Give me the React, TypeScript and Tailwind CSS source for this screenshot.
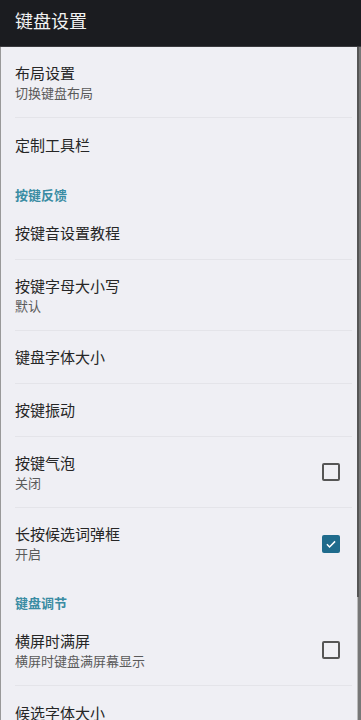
import React from "react";

type Item = {
  title: string;
  sub?: string;
  check?: boolean | null;
};

const group1: Item[] = [
  { title: "布局设置", sub: "切换键盘布局" },
  { title: "定制工具栏" },
];

const group2: Item[] = [
  { title: "按键音设置教程" },
  { title: "按键字母大小写", sub: "默认" },
  { title: "键盘字体大小" },
  { title: "按键振动" },
  { title: "按键气泡", sub: "关闭", check: false },
  { title: "长按候选词弹框", sub: "开启", check: true },
];

const group3: Item[] = [
  { title: "横屏时满屏", sub: "横屏时键盘满屏幕显示", check: false },
  { title: "候选字体大小" },
];

function CheckBox({ checked }: { checked: boolean }) {
  if (checked) {
    return (
      <div className="flex h-[18px] w-[18px] items-center justify-center rounded-[2px] bg-[#1f6b8c]">
        <svg viewBox="0 0 24 24" className="h-[14px] w-[14px]" fill="none">
          <path d="M5 12.5l4.5 4.5L19 7.5" stroke="#fff" strokeWidth="2.6" />
        </svg>
      </div>
    );
  }
  return <div className="h-[18px] w-[18px] rounded-[2px] border-2 border-[#555]" />;
}

function Row({ item, last }: { item: Item; last?: boolean }) {
  return (
    <div className={"ml-[14px] mr-[4px] flex items-center " + (item.sub ? "h-[71px] " : "h-[53px] ") + (last ? "" : "border-b border-[#e4e4e9]")}>
      <div className="flex flex-1 flex-col">
        <div className="text-[15px] leading-[20px] text-[#262626]">{item.title}</div>
        {item.sub && <div className="mt-[1px] text-[13px] leading-[18px] text-[#5a5a5a]">{item.sub}</div>}
      </div>
      {item.check !== undefined && item.check !== null && (
        <div className="mr-[12px]">
          <CheckBox checked={item.check} />
        </div>
      )}
    </div>
  );
}

function Header({ text }: { text: string }) {
  return (
    <div className="flex h-[36px] items-end px-[14px] pb-[3px] text-[13px] font-semibold leading-[18px] text-[#3a8ca3]">
      {text}
    </div>
  );
}

export default function App() {
  return (
    <div
      className="relative h-[720px] w-[361px] overflow-hidden bg-[#efeff4]"
      style={{ fontFamily: '"Noto Sans CJK SC", "Noto Sans", sans-serif' }}
    >
      <div className="flex h-[47px] items-center border-b border-[#3a3a3e] bg-[#1b1c20] px-[15px] pb-[6px]">
        <span className="text-[18px] text-[#f2f2f2]">键盘设置</span>
      </div>
      <div className="border-l border-[#999] pr-[5px]">
        {group1.map((it, i) => (
          <Row key={it.title} item={it} last={i === group1.length - 1} />
        ))}
        <Header text="按键反馈" />
        {group2.map((it, i) => (
          <Row key={it.title} item={it} last={i === group2.length - 1} />
        ))}
        <Header text="键盘调节" />
        {group3.map((it, i) => (
          <Row key={it.title} item={it} last={i === group3.length - 1} />
        ))}
      </div>
      <div className="absolute right-0 top-[47px] h-[673px] w-[4px] border-l border-[#bbb] bg-[#777]" />
      <div className="absolute right-[2px] top-[47px] h-[550px] w-[2px] bg-[#555]" />
    </div>
  );
}
